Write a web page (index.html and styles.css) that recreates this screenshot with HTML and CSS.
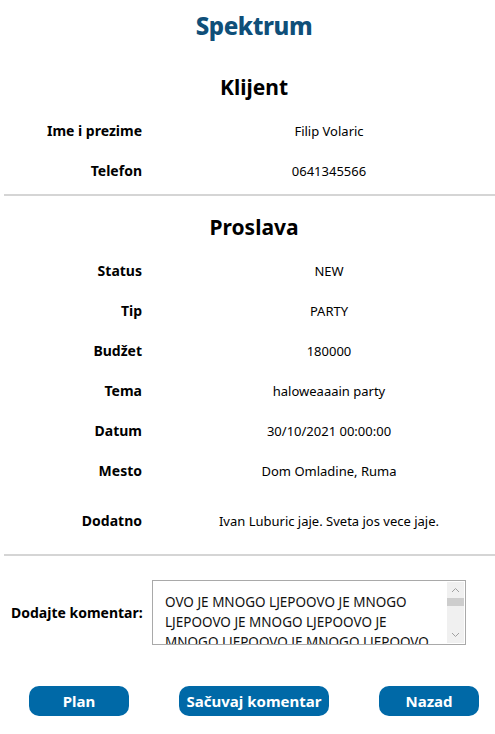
FILE: index.html
```html
<!DOCTYPE html>
<html lang="sr">
<head>
<meta charset="utf-8">
<title>Spektrum</title>
<link rel="stylesheet" href="styles.css">
</head>
<body>
<header class="brand">Spektrum</header>

<section class="section">
  <h2 class="section-title">Klijent</h2>
  <div class="details">
    <div class="label">Ime i prezime</div><div class="value">Filip Volaric</div>
    <div class="label">Telefon</div><div class="value">0641345566</div>
  </div>
</section>

<hr class="divider">

<section class="section">
  <h2 class="section-title section-title-second">Proslava</h2>
  <div class="details">
    <div class="label">Status</div><div class="value">NEW</div>
    <div class="label">Tip</div><div class="value">PARTY</div>
    <div class="label">Budžet</div><div class="value">180000</div>
    <div class="label">Tema</div><div class="value">haloweaaain party</div>
    <div class="label">Datum</div><div class="value">30/10/2021 00:00:00</div>
    <div class="label">Mesto</div><div class="value">Dom Omladine, Ruma</div>
    <div class="label extra">Dodatno</div><div class="value extra">Ivan Luburic jaje. Sveta jos vece jaje.</div>
  </div>
</section>

<hr class="divider divider-bottom">

<div class="comment-row">
  <label class="comment-label">Dodajte komentar:</label>
  <div class="comment-box">
    <div class="comment-text">OVO JE MNOGO LJEPOOVO JE MNOGO LJEPOOVO JE MNOGO LJEPOOVO JE MNOGO LJEPOOVO JE MNOGO LJEPOOVO JE MNOGO LJEPOO</div>
    <div class="scrollbar">
      <svg class="arrow" width="9" height="6" viewBox="0 0 9 6"><path d="M1 5 L4.5 1.5 L8 5" fill="none" stroke="#a0a0a0" stroke-width="1"/></svg>
      <div class="track"><div class="thumb"></div></div>
      <svg class="arrow" width="9" height="6" viewBox="0 0 9 6"><path d="M1 1 L4.5 4.5 L8 1" fill="none" stroke="#a0a0a0" stroke-width="1"/></svg>
    </div>
  </div>
</div>

<div class="actions">
  <button class="btn btn-small">Plan</button>
  <button class="btn btn-wide">Sačuvaj komentar</button>
  <button class="btn btn-small">Nazad</button>
</div>
</body>
</html>
```

FILE: styles.css
```css
* { box-sizing: border-box; }

body {
  margin: 0;
  background: #ffffff;
  color: #000000;
  font-family: "Noto Sans", "Open Sans", sans-serif;
  font-size: 13px;
}

.brand {
  height: 52px;
  line-height: 52px;
  text-align: center;
  padding-left: 13px;
  font-size: 24px;
  font-weight: 800;
  color: #0f4f79;
  letter-spacing: -0.4px;
}

.section-title {
  margin: 0;
  height: 55px;
  line-height: 70px;
  text-align: center;
  padding-left: 13px;
  font-size: 21px;
  font-weight: 700;
}

.section-title-second {
  height: 51px;
  line-height: 62px;
}

.section {
  padding-bottom: 3px;
}

.details {
  display: grid;
  grid-template-columns: 142px 1fr;
  column-gap: 21px;
  grid-auto-rows: 40px;
  margin-top: 4px;
}

.label {
  text-align: right;
  font-weight: 700;
  font-size: 14px;
  line-height: 40px;
}

.value {
  text-align: center;
  line-height: 40px;
}

.extra {
  margin-top: 10px;
}

.divider {
  margin: 0 0 0 4px;
  border: 0;
  height: 2px;
  background: #d5d5d5;
}

.divider-bottom {
  margin-top: 20px;
}

.comment-row {
  display: flex;
  align-items: center;
  gap: 9px;
  margin-top: 24px;
  padding-left: 11px;
}

.comment-label {
  font-weight: 700;
  font-size: 14px;
  width: 132px;
  white-space: nowrap;
}

.comment-box {
  width: 314px;
  height: 65px;
  border: 1px solid #a9a9a9;
  display: flex;
  overflow: hidden;
  background: #fff;
}

.comment-text {
  flex: 1;
  padding: 11px 8px 0 12px;
  font-size: 13.5px;
  line-height: 20px;
  color: #111;
  overflow: hidden;
}

.scrollbar {
  width: 17px;
  margin: 1px 1px 1px 0;
  background: #f0f0f0;
  display: flex;
  flex-direction: column;
  align-items: center;
}

.arrow {
  margin: 5px 0;
  flex: none;
}

.track {
  flex: 1;
  width: 100%;
}

.thumb {
  height: 8px;
  background: #cdcdcd;
}

.actions {
  display: flex;
  gap: 50px;
  padding-left: 29px;
  margin-top: 41px;
}

.btn {
  height: 30px;
  border: 0;
  border-radius: 10px;
  background: #0069a7;
  color: #ffffff;
  font-family: "Noto Sans", "Open Sans", sans-serif;
  font-size: 15px;
  font-weight: 700;
  padding: 0;
}

.btn-small { width: 100px; }
.btn-wide { width: 150px; }
```
